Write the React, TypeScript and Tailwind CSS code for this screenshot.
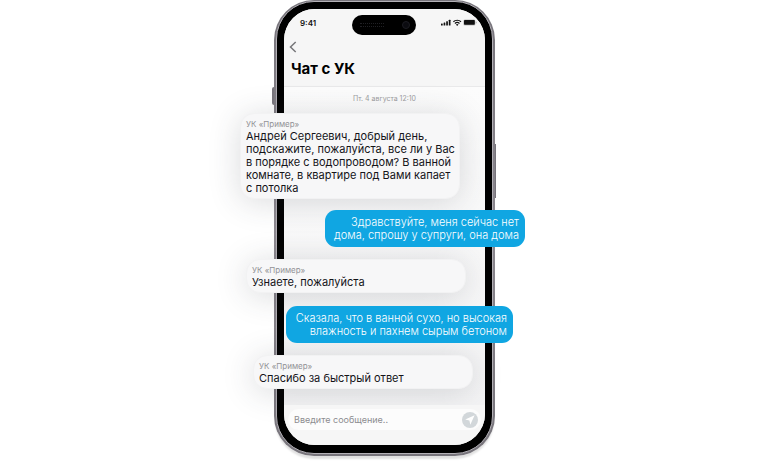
import type { ReactNode } from "react";

function StatusIcons() {
  return (
    <svg width="36" height="8" viewBox="0 0 36 8" fill="#111" aria-hidden="true">
      <rect x="0" y="4.6" width="1.7" height="2" rx="0.4" />
      <rect x="2.6" y="3.6" width="1.7" height="3" rx="0.4" />
      <rect x="5.2" y="2.2" width="1.7" height="4.4" rx="0.4" />
      <rect x="7.8" y="0.8" width="1.7" height="5.8" rx="0.4" />
      <g fill="none" stroke="#111" strokeWidth="1.2">
        <path d="M12.4 2.8a5.4 5.4 0 0 1 7.6 0" />
        <path d="M13.9 4.5a3.3 3.3 0 0 1 4.6 0" />
      </g>
      <path d="M14.9 5.6a1.9 1.9 0 0 1 2.6 0L16.2 7z" />
      <rect x="22.4" y="0.4" width="12" height="6" rx="1.5" fill="#bbb" />
      <rect x="23" y="1" width="10.8" height="4.8" rx="0.8" />
      <rect x="34.8" y="2.6" width="0.8" height="1.8" rx="0.4" fill="#aaa" />
    </svg>
  );
}

function Incoming({ className, children }: { className: string; children: ReactNode }) {
  return (
    <article
      className={`w-[220px] rounded-[14px] border border-[#f2f2f3] bg-[#f7f7f8] px-[5px] pt-1 pb-[3px] shadow-[0_3px_32px_rgba(50,55,65,0.18)] ${className}`}
    >
      <p className="text-[8px] leading-[12px] text-[#929296]">УК «Пример»</p>
      <p className="whitespace-nowrap text-[11px] leading-[13px] text-[#141418]">{children}</p>
    </article>
  );
}

function Outgoing({ className, children }: { className: string; children: ReactNode }) {
  return (
    <p
      className={`rounded-[11px] bg-[#10a6e2] px-[6px] pt-[6px] pb-[5px] text-right text-[11px] leading-[13px] font-light whitespace-nowrap text-white ${className}`}
    >
      {children}
    </p>
  );
}

export default function App() {
  return (
    <main className="flex min-h-screen justify-center overflow-hidden bg-white pl-1 font-['Inter','Liberation_Sans',sans-serif]">
      <div className="relative w-[221px] self-start rounded-[40px] bg-linear-to-b from-[#77747b] via-[#8d8990] to-[#77747b] px-[2px] pt-px pb-[2px] shadow-[0_4px_2px_-1px_rgba(0,0,0,0.12)]">
        <span className="absolute top-[87px] -left-[2px] h-[18px] w-[2px] rounded-l-sm bg-[#77747b]" />
        <span className="absolute top-[144px] -right-px h-[54px] w-px bg-[#77747b]" />
        <div className="rounded-[38px] border border-[#b4b1b7] bg-black px-[7px] pt-[7px] pb-2">
          <div className="flex flex-col rounded-[31px] bg-[#fbfbfb]">
            <header className="rounded-t-[31px] border-b border-[#e9e9ea] bg-[#f6f6f6]">
              <div className="flex items-start pr-2 pl-4">
                <time className="w-[52px] pt-2 text-[8px] leading-[12px] font-semibold text-[#111]">9:41</time>
                <div className="mt-[6px] flex h-5 w-16 items-center justify-between rounded-full bg-black pr-[6px] pl-2">
                  <span className="h-1 w-6 border-y border-dotted border-[#202024]" />
                  <span className="size-2 rounded-full border border-[#1c1c22] bg-[#0b0b10]" />
                </div>
                <span className="ml-auto pt-[10px]">
                  <StatusIcons />
                </span>
              </div>
              <button type="button" aria-label="Назад" className="mt-[6px] ml-[5px] block">
                <svg width="8" height="12" viewBox="0 0 8 12" fill="none" stroke="#77777a" strokeWidth="1.5" aria-hidden="true">
                  <path d="M6.7 1 1.5 6l5.2 5" />
                </svg>
              </button>
              <h1 className="mt-[6px] mb-[7px] ml-[7px] text-[15px] leading-5 font-bold text-black">Чат с УК</h1>
            </header>

            <section className="flex h-[318px] flex-col bg-linear-to-b from-[#fcfcfc] to-[#f4f4f5]">
              <p className="pt-[6px] pb-[9px] text-center text-[7px] leading-[11px] text-[#9c9c9f]">Пт. 4 августа 12:10</p>
              <Incoming className="-ml-[44px]">
                Андрей Сергеевич, добрый день,
                <br />
                подскажите, пожалуйста, все ли у Вас
                <br />
                в порядке с водопроводом? В ванной
                <br />
                комнате, в квартире под Вами капает
                <br />с потолка
              </Incoming>
              <Outgoing className="z-10 mt-[11px] -mr-10 w-[200px] self-end">
                Здравствуйте, меня сейчас нет
                <br />
                дома, спрошу у супруги, она дома
              </Outgoing>
              <Incoming className="mt-3 -ml-[38px]">Узнаете, пожалуйста</Incoming>
              <Outgoing className="z-10 mt-[13px] -mr-7 w-[227px] self-end">
                Сказала, что в ванной сухо, но высокая
                <br />
                влажность и пахнем сырым бетоном
              </Outgoing>
              <Incoming className="mt-3 -ml-[31px]">Спасибо за быстрый ответ</Incoming>
            </section>

            <footer className="rounded-b-[31px] bg-[#f6f6f6] px-1 pt-1 pb-[15px]">
              <form className="flex h-[21px] items-center rounded-full bg-[#fcfcfc] pr-[3px] pl-[6px]">
                <input
                  type="text"
                  aria-label="Сообщение"
                  placeholder="Введите сообщение.."
                  className="min-w-0 flex-1 text-[9px] leading-[12px] outline-none placeholder:text-[#8c8c90]"
                />
                <button type="button" aria-label="Отправить" className="size-4 shrink-0 rounded-full bg-[#d2d7da]">
                  <svg width="16" height="16" viewBox="0 0 16 16" fill="#fff" aria-hidden="true">
                    <path d="M12.6 3.3 3.2 7.6l4.2.8.9 4.3z" />
                  </svg>
                </button>
              </form>
            </footer>
          </div>
        </div>
      </div>
    </main>
  );
}
